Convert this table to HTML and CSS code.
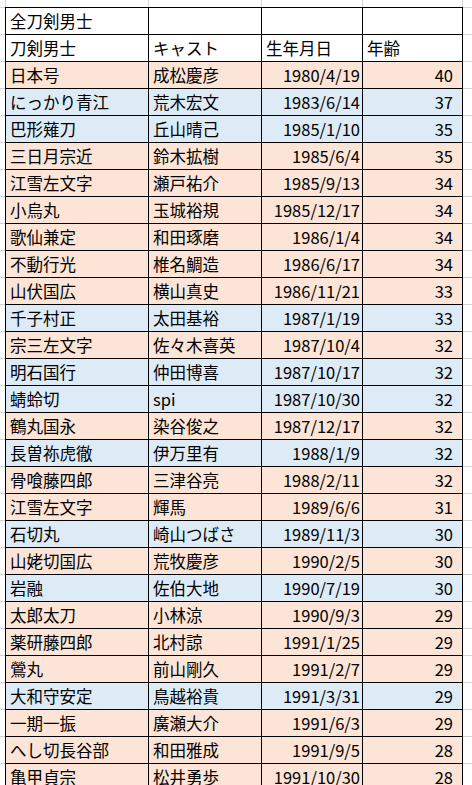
FILE: index.html
```html
<!DOCTYPE html>
<html lang="ja">
<head>
<meta charset="utf-8">
<title>全刀剣男士</title>
<link rel="stylesheet" href="styles.css">
</head>
<body>
<div class="sheet">
  <div class="row plain"><div class="cell">全刀剣男士</div><div class="cell"></div><div class="cell"></div><div class="cell"></div></div>
  <div class="row plain"><div class="cell">刀剣男士</div><div class="cell">キャスト</div><div class="cell">生年月日</div><div class="cell">年齢</div></div>
  <div class="row peach"><div class="cell">日本号</div><div class="cell">成松慶彦</div><div class="cell date">1980/4/19</div><div class="cell age">40</div></div>
  <div class="row blue"><div class="cell">にっかり青江</div><div class="cell">荒木宏文</div><div class="cell date">1983/6/14</div><div class="cell age">37</div></div>
  <div class="row blue"><div class="cell">巴形薙刀</div><div class="cell">丘山晴己</div><div class="cell date">1985/1/10</div><div class="cell age">35</div></div>
  <div class="row peach"><div class="cell">三日月宗近</div><div class="cell">鈴木拡樹</div><div class="cell date">1985/6/4</div><div class="cell age">35</div></div>
  <div class="row peach"><div class="cell">江雪左文字</div><div class="cell">瀬戸祐介</div><div class="cell date">1985/9/13</div><div class="cell age">34</div></div>
  <div class="row peach"><div class="cell">小烏丸</div><div class="cell">玉城裕規</div><div class="cell date">1985/12/17</div><div class="cell age">34</div></div>
  <div class="row peach"><div class="cell">歌仙兼定</div><div class="cell">和田琢磨</div><div class="cell date">1986/1/4</div><div class="cell age">34</div></div>
  <div class="row peach"><div class="cell">不動行光</div><div class="cell">椎名鯛造</div><div class="cell date">1986/6/17</div><div class="cell age">34</div></div>
  <div class="row peach"><div class="cell">山伏国広</div><div class="cell">横山真史</div><div class="cell date">1986/11/21</div><div class="cell age">33</div></div>
  <div class="row blue"><div class="cell">千子村正</div><div class="cell">太田基裕</div><div class="cell date">1987/1/19</div><div class="cell age">33</div></div>
  <div class="row peach"><div class="cell">宗三左文字</div><div class="cell">佐々木喜英</div><div class="cell date">1987/10/4</div><div class="cell age">32</div></div>
  <div class="row blue"><div class="cell">明石国行</div><div class="cell">仲田博喜</div><div class="cell date">1987/10/17</div><div class="cell age">32</div></div>
  <div class="row blue"><div class="cell">蜻蛉切</div><div class="cell">spi</div><div class="cell date">1987/10/30</div><div class="cell age">32</div></div>
  <div class="row peach"><div class="cell">鶴丸国永</div><div class="cell">染谷俊之</div><div class="cell date">1987/12/17</div><div class="cell age">32</div></div>
  <div class="row blue"><div class="cell">長曽祢虎徹</div><div class="cell">伊万里有</div><div class="cell date">1988/1/9</div><div class="cell age">32</div></div>
  <div class="row peach"><div class="cell">骨喰藤四郎</div><div class="cell">三津谷亮</div><div class="cell date">1988/2/11</div><div class="cell age">32</div></div>
  <div class="row peach"><div class="cell">江雪左文字</div><div class="cell">輝馬</div><div class="cell date">1989/6/6</div><div class="cell age">31</div></div>
  <div class="row blue"><div class="cell">石切丸</div><div class="cell">崎山つばさ</div><div class="cell date">1989/11/3</div><div class="cell age">30</div></div>
  <div class="row peach"><div class="cell">山姥切国広</div><div class="cell">荒牧慶彦</div><div class="cell date">1990/2/5</div><div class="cell age">30</div></div>
  <div class="row blue"><div class="cell">岩融</div><div class="cell">佐伯大地</div><div class="cell date">1990/7/19</div><div class="cell age">30</div></div>
  <div class="row peach"><div class="cell">太郎太刀</div><div class="cell">小林涼</div><div class="cell date">1990/9/3</div><div class="cell age">29</div></div>
  <div class="row peach"><div class="cell">薬研藤四郎</div><div class="cell">北村諒</div><div class="cell date">1991/1/25</div><div class="cell age">29</div></div>
  <div class="row peach"><div class="cell">鶯丸</div><div class="cell">前山剛久</div><div class="cell date">1991/2/7</div><div class="cell age">29</div></div>
  <div class="row blue"><div class="cell">大和守安定</div><div class="cell">鳥越裕貴</div><div class="cell date">1991/3/31</div><div class="cell age">29</div></div>
  <div class="row peach"><div class="cell">一期一振</div><div class="cell">廣瀬大介</div><div class="cell date">1991/6/3</div><div class="cell age">29</div></div>
  <div class="row peach"><div class="cell">へし切長谷部</div><div class="cell">和田雅成</div><div class="cell date">1991/9/5</div><div class="cell age">28</div></div>
  <div class="row peach"><div class="cell">亀甲貞宗</div><div class="cell">松井勇歩</div><div class="cell date">1991/10/30</div><div class="cell age">28</div></div>
</div>
</body>
</html>
```
FILE: styles.css
```css
html, body {
  margin: 0;
  padding: 0;
}

body {
  background-color: #ffffff;
  background-image:
    linear-gradient(#d4d4d4, #d4d4d4),
    linear-gradient(#d4d4d4, #d4d4d4),
    linear-gradient(#d4d4d4, #d4d4d4),
    linear-gradient(#d4d4d4, #d4d4d4),
    linear-gradient(#d4d4d4, #d4d4d4),
    linear-gradient(#d4d4d4 0 1px, transparent 1px);
  background-size: 1px 100%, 1px 100%, 1px 100%, 1px 100%, 1px 100%, 100% 27px;
  background-position: 5px 0, 148px 0, 261px 0, 362px 0, 462px 0, 0 7px;
  background-repeat: no-repeat, no-repeat, no-repeat, no-repeat, no-repeat, repeat;
  font-family: "Noto Sans CJK JP", "Noto Sans", sans-serif;
  font-size: 16.5px;
  color: #000;
  overflow: hidden;
}

.sheet {
  display: grid;
  grid-template-columns: 143px 113px 101px 100px;
  grid-auto-rows: 27px;
  width: max-content;
  margin: 7px 0 0 5px;
  border-left: 1px solid #000;
  border-top: 1px solid #000;
}

.row {
  display: contents;
}

.cell {
  box-sizing: border-box;
  height: 27px;
  border-right: 1px solid #000;
  border-bottom: 1px solid #000;
  padding: 0 4px;
  display: flex;
  align-items: center;
  white-space: nowrap;
  overflow: hidden;
  background: #ffffff;
}

.peach > .cell {
  background: #fce4d6;
}

.blue > .cell {
  background: #ddebf7;
}

.date {
  justify-content: flex-end;
  padding-right: 2px;
}

.age {
  justify-content: flex-end;
  padding-right: 9px;
}
```
